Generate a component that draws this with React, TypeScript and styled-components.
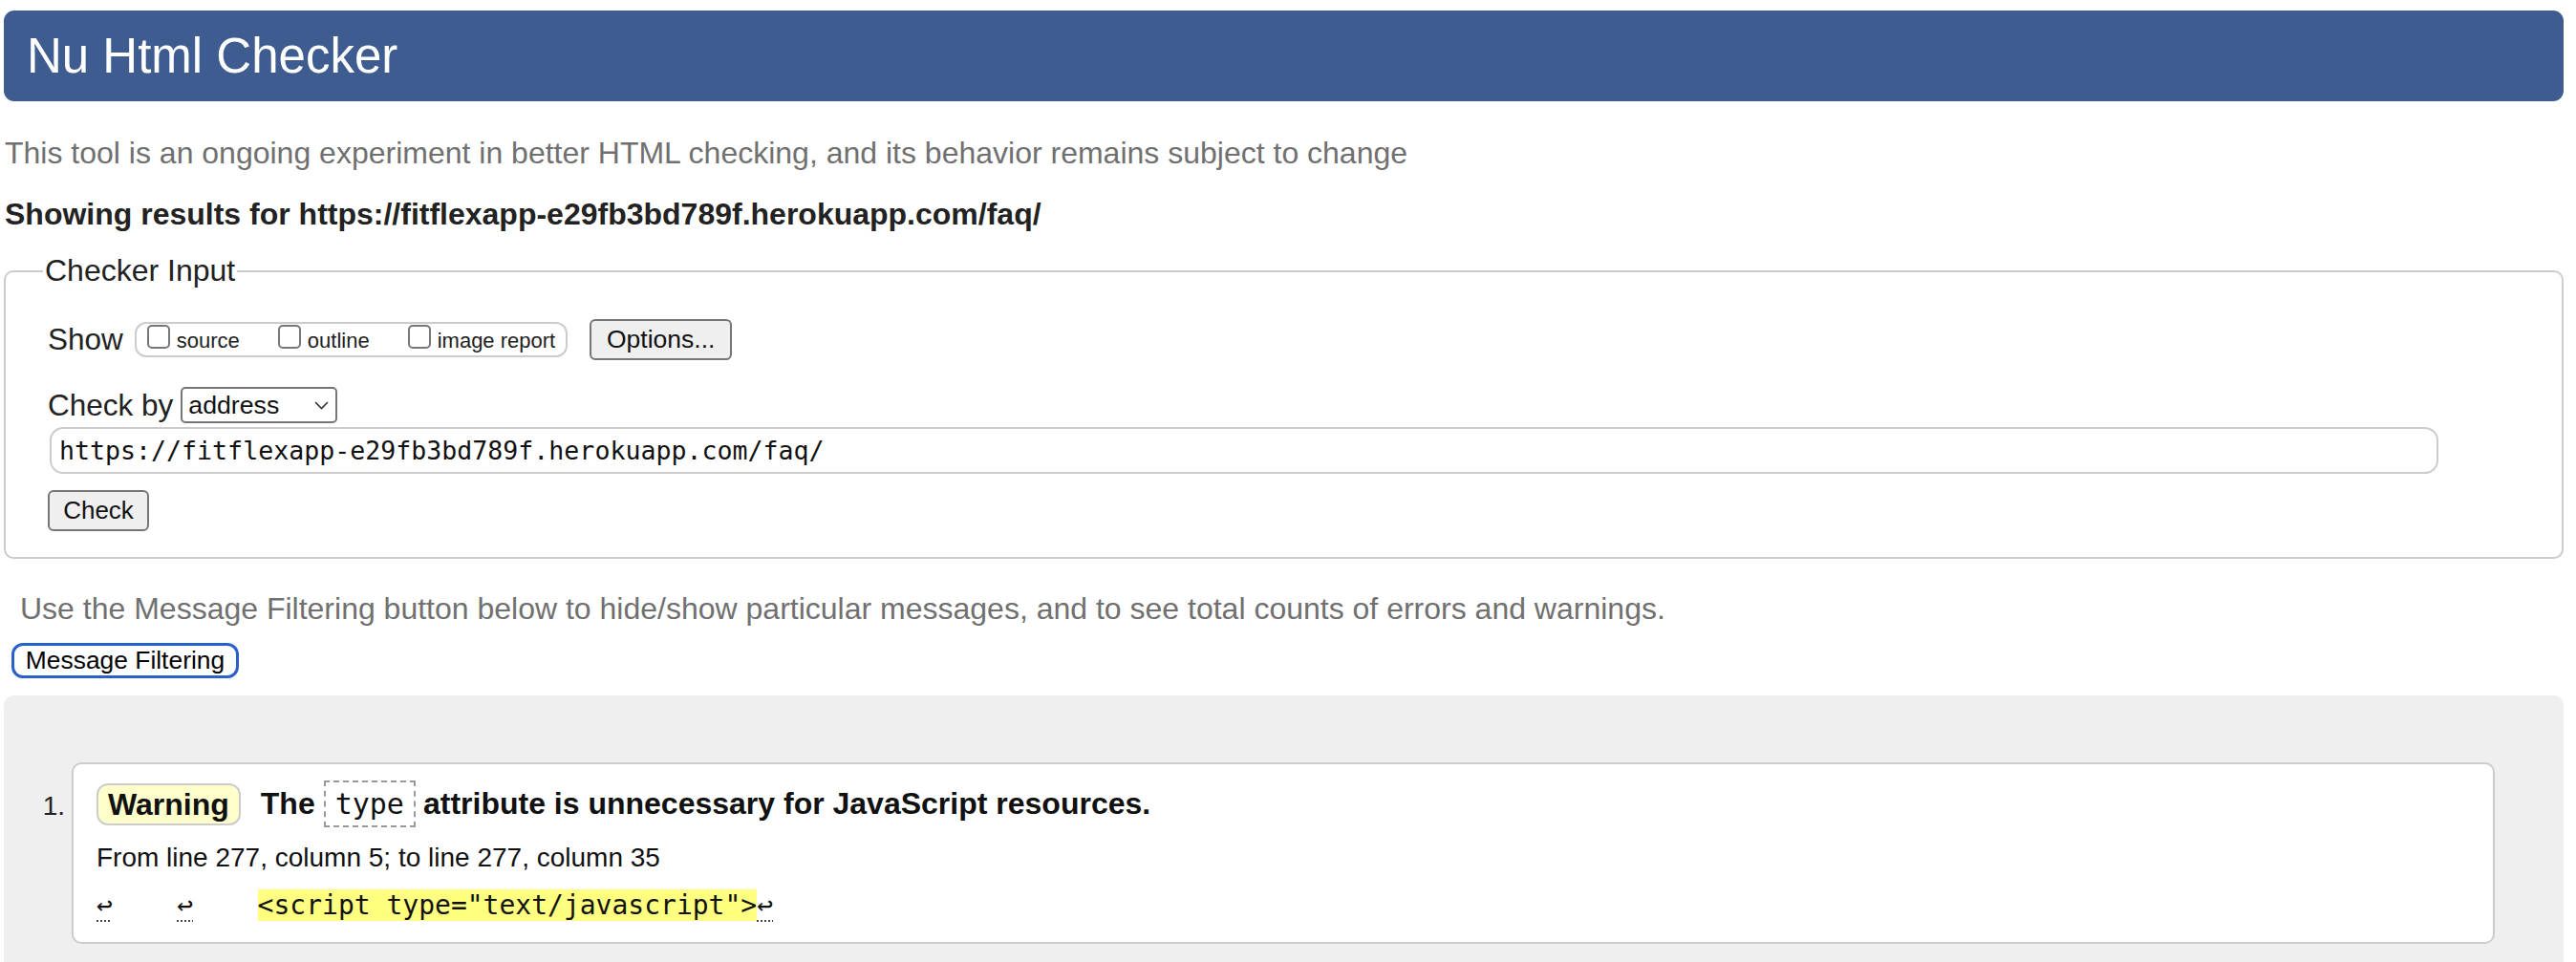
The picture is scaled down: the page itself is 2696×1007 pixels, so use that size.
import React from "react";
import styled, { createGlobalStyle } from "styled-components";

const Global = createGlobalStyle`
  html, body { margin: 0; padding: 0; background: #fff; }
  body { font-family: "Liberation Sans", Arial, sans-serif; color: #222; overflow: hidden; }
  * { box-sizing: border-box; }
`;

const Page = styled.div`
  padding: 11px 13px 0 4px;
`;

const Header = styled.header`
  height: 95px;
  background: #3e5c8f;
  border-radius: 11px;
`;

const Title = styled.h1`
  margin: 0;
  padding-left: 24px;
  font-size: 51px;
  line-height: 95px;
  font-weight: normal;
  color: #fff;
`;

const Intro = styled.p<{ $indent?: number; $top: number }>`
  margin: ${(p) => p.$top}px 0 0 0;
  padding-left: ${(p) => p.$indent ?? 1}px;
  font-size: 32px;
  line-height: 40px;
  color: #707070;
  white-space: nowrap;
`;

const ResultsFor = styled.p`
  margin: 24px 0 0 0;
  padding-left: 1px;
  font-size: 32px;
  line-height: 40px;
  font-weight: bold;
  color: #222;
  white-space: nowrap;
`;

const Fieldset = styled.fieldset`
  margin: 21px 0 0 0;
  border: 2px solid #cccccc;
  border-radius: 10px;
  padding: 0 0 27px 44px;
  min-width: 0;
`;

const Legend = styled.legend`
  font-size: 32px;
  padding: 0 2px;
  margin-left: -5px;
  color: #222;
`;

const Row = styled.div<{ $top: number; $h: number }>`
  display: flex;
  align-items: center;
  height: ${(p) => p.$h}px;
  margin-top: ${(p) => p.$top}px;
`;

const RowLabel = styled.span<{ $gap: number }>`
  font-size: 31.5px;
  color: #222;
  margin-right: ${(p) => p.$gap}px;
  white-space: nowrap;
`;

const Group = styled.div`
  display: inline-flex;
  align-items: baseline;
  height: 37px;
  border: 2px solid #cccccc;
  border-radius: 12px;
  padding: 0 11px;
`;

const Option = styled.label<{ $first?: boolean }>`
  display: inline-flex;
  align-items: baseline;
  margin-left: ${(p) => (p.$first ? 0 : 40)}px;
  font-size: 22px;
  line-height: 34px;
  color: #222;
  white-space: nowrap;
`;

const Box = styled.span`
  display: inline-block;
  width: 24px;
  height: 25px;
  border: 2px solid #777;
  border-radius: 5px;
  background: #fff;
  margin-right: 7px;
  transform: translateY(1px);
`;

const Button = styled.button<{ $w: number; $h: number }>`
  width: ${(p) => p.$w}px;
  height: ${(p) => p.$h}px;
  border: 2px solid #767676;
  border-radius: 6px;
  background: #efefef;
  font-family: "Liberation Sans", Arial, sans-serif;
  font-size: 26.5px;
  color: #111;
  padding: 0;
`;

const OptionsButton = styled(Button)`
  margin-left: 23px;
`;

const CheckButton = styled(Button)`
  display: block;
  margin-top: 17px;
  font-size: 26px;
`;

const Select = styled.div`
  display: flex;
  align-items: center;
  justify-content: space-between;
  width: 164px;
  height: 38px;
  border: 2px solid #767676;
  border-radius: 5px;
  padding: 0 7px 0 6px;
  font-size: 26.7px;
  color: #111;
  background: #fff;
`;

const UrlInput = styled.input`
  display: block;
  margin: 4px 0 0 2px;
  width: calc(100% - 131px);
  height: 49px;
  border: 2px solid #cccccc;
  border-radius: 14px;
  padding: 0 8px;
  font-family: "DejaVu Sans Mono", Menlo, monospace;
  font-size: 26.6px;
  color: #111;
  background: #fff;
  outline: none;
`;

const FilterButton = styled.button`
  display: block;
  margin: 16px 0 0 8px;
  width: 238px;
  height: 37px;
  border: 3px solid #2b5fcb;
  border-radius: 12px;
  background: #fff;
  padding: 0;
  font-family: "Liberation Sans", Arial, sans-serif;
  font-size: 26.4px;
  color: #000;
`;

const Results = styled.ol`
  list-style: none;
  margin: 18px 0 0 0;
  background: #efefef;
  border-radius: 10px 10px 0 0;
  padding: 70px 72px 20px 36px;
`;

const Item = styled.li`
  display: flex;
  align-items: flex-start;
`;

const Num = styled.span`
  width: 35px;
  flex: none;
  text-align: right;
  padding-right: 7px;
  margin-top: 30px;
  font-size: 28px;
  line-height: 32px;
  color: #222;
`;

const Card = styled.div`
  flex: 1;
  background: #fff;
  border: 2px solid #cccccc;
  border-radius: 10px;
  padding: 17px 24px 22px 24px;
`;

const MessageLine = styled.p`
  display: flex;
  align-items: center;
  height: 49px;
  margin: 0;
  font-size: 32px;
  font-weight: bold;
  color: #111;
  white-space: nowrap;
`;

const Badge = styled.strong`
  display: inline-block;
  background: #ffffcc;
  border: 2px solid #cccccc;
  border-radius: 12px;
  padding: 3px 10px;
  line-height: 34px;
  margin-right: 21px;
`;

const CodeBox = styled.code`
  font-family: "DejaVu Sans Mono", Menlo, monospace;
  font-weight: normal;
  font-size: 30px;
  line-height: 35px;
  padding: 5px 10px;
  border: 2px dashed #999;
  margin: 0 8px 0 9px;
`;

const Location = styled.p`
  margin: 15px 0 0 0;
  font-size: 28px;
  line-height: 34px;
  color: #111;
  white-space: nowrap;
`;

const Extract = styled.pre`
  margin: 16px 0 0 0;
  font-family: "DejaVu Sans Mono", Menlo, monospace;
  font-size: 28px;
  line-height: normal;
  color: #111;
`;

const LineBreak = styled.span`
  font-size: 28px;
  text-decoration: underline dotted #444;
  text-decoration-thickness: 2px;
  text-underline-offset: 6px;
`;

const Mark = styled.mark`
  background: #ffff80;
  color: #111;
`;

const Chevron = () => (
  <svg width="15" height="9" viewBox="0 0 15 9" fill="none">
    <polyline points="1,1 7.5,7.5 14,1" stroke="#333" strokeWidth="1.6" />
  </svg>
);

const url = "https://fitflexapp-e29fb3bd789f.herokuapp.com/faq/";

export default function App() {
  return (
    <>
      <Global />
      <Page>
        <Header>
          <Title>Nu Html Checker</Title>
        </Header>
        <Intro $top={34}>
          This tool is an ongoing experiment in better HTML checking, and its behavior remains subject to change
        </Intro>
        <ResultsFor>Showing results for {url}</ResultsFor>
        <Fieldset>
          <Legend>Checker Input</Legend>
          <Row $top={32} $h={43}>
            <RowLabel $gap={12}>Show</RowLabel>
            <Group>
              <Option $first>
                <Box />
                source
              </Option>
              <Option>
                <Box />
                outline
              </Option>
              <Option>
                <Box />
                image report
              </Option>
            </Group>
            <OptionsButton $w={149} $h={43}>Options...</OptionsButton>
          </Row>
          <Row $top={28} $h={38}>
            <RowLabel $gap={8}>Check by</RowLabel>
            <Select>
              <span>address</span>
              <Chevron />
            </Select>
          </Row>
          <UrlInput readOnly value={url} />
          <CheckButton $w={106} $h={43}>Check</CheckButton>
        </Fieldset>
        <Intro $top={32} $indent={17}>
          Use the Message Filtering button below to hide/show particular messages, and to see total counts of errors and warnings.
        </Intro>
        <FilterButton>Message Filtering</FilterButton>
        <Results>
          <Item>
            <Num>1.</Num>
            <Card>
              <MessageLine>
                <Badge>Warning</Badge>
                <span>The</span>
                <CodeBox>type</CodeBox>
                <span>attribute is unnecessary for JavaScript resources.</span>
              </MessageLine>
              <Location>From line 277, column 5; to line 277, column 35</Location>
              <Extract>
                <LineBreak>↩</LineBreak>
                {"    "}
                <LineBreak>↩</LineBreak>
                {"    "}
                <Mark>{'<script type="text/javascript">'}</Mark>
                <LineBreak>↩</LineBreak>
              </Extract>
            </Card>
          </Item>
        </Results>
      </Page>
    </>
  );
}
